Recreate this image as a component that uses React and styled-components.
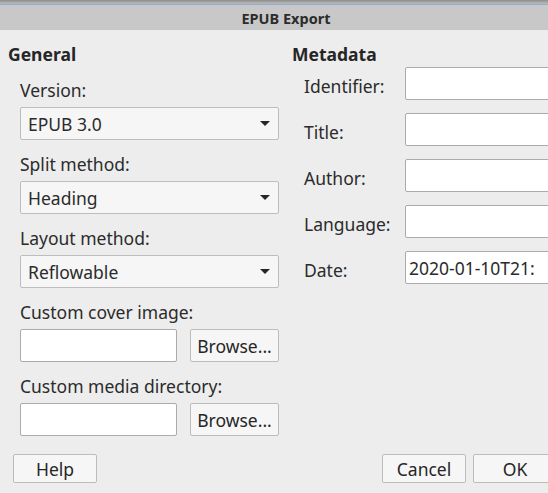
import React from "react";
import styled, { createGlobalStyle } from "styled-components";

const Global = createGlobalStyle`
  html, body { margin: 0; padding: 0; background: #ededed; }
  body { width: 548px; height: 493px; overflow: hidden; }
  #root { width: 548px; height: 493px; overflow: hidden; }
`;

const Window = styled.div`
  width: 572px;
  height: 493px;
  background: #ededed;
  font-family: "Noto Sans", "Open Sans", sans-serif;
  color: #2b2b2b;
  display: flex;
  flex-direction: column;
`;

const TopStrip = styled.div`
  height: 4px;
  background: linear-gradient(#8d8d8d, #bdbdbd);
  border-bottom: 1px solid #92abce;
`;

const TitleBar = styled.div`
  height: 25px;
  background: #c8c8c8;
  display: flex;
  align-items: center;
  justify-content: center;
  font-size: 14.5px;
  font-weight: 700;
  color: #2c2c2c;
`;

const Body = styled.div`
  display: grid;
  grid-template-columns: 272px 1fr;
  column-gap: 12px;
  padding: 13px 0 0 8px;
`;

const Column = styled.div`
  display: flex;
  flex-direction: column;
`;

const Heading = styled.div`
  font-size: 17.5px;
  font-weight: 700;
  line-height: 23px;
  color: #262626;
`;

const Field = styled.div`
  display: flex;
  flex-direction: column;
  padding-left: 12px;
`;

const Label = styled.div`
  font-size: 17.5px;
  line-height: 24px;
  margin-top: 12px;
  margin-bottom: 5px;
`;

const Combo = styled.div`
  width: 259px;
  height: 33px;
  box-sizing: border-box;
  border: 1px solid #bdbdbd;
  border-radius: 2px;
  background: #f6f6f6;
  display: flex;
  align-items: center;
  justify-content: space-between;
  padding: 0 8px 0 7px;
  font-size: 17.5px;
`;

const Arrow = styled.svg`
  width: 10px;
  height: 5px;
  fill: #262626;
`;

const FileRow = styled.div`
  display: flex;
  gap: 13px;
`;

const TextBox = styled.div`
  box-sizing: border-box;
  height: 33px;
  width: ${(p) => p.$w || "auto"};
  flex: ${(p) => (p.$grow ? 1 : "none")};
  border: 1px solid #ababab;
  border-radius: 2px;
  background: #ffffff;
  font-size: 17.5px;
  display: flex;
  align-items: center;
  padding-left: 3px;
  white-space: nowrap;
  overflow: hidden;
`;

const Button = styled.div`
  box-sizing: border-box;
  width: ${(p) => p.$w};
  height: ${(p) => p.$h};
  border: 1px solid #bcbcbc;
  border-radius: 2px;
  background: #f6f6f6;
  display: flex;
  align-items: center;
  justify-content: center;
  font-size: 17.5px;
  color: #262626;
`;

const MetaRows = styled.div`
  display: flex;
  flex-direction: column;
  gap: 13px;
  padding-left: 12px;
  margin-top: 1px;
`;

const MetaRow = styled.div`
  display: grid;
  grid-template-columns: 101px 1fr;
  align-items: center;
`;

const MetaLabel = styled.div`
  font-size: 17.5px;
  padding-top: 5px;
`;

const Footer = styled.div`
  display: flex;
  align-items: center;
  padding: 18px 0 0 13px;
`;

const Spacer = styled.div`
  flex: 1;
`;

const FooterRight = styled.div`
  display: flex;
  gap: 7px;
  padding-right: 15px;
`;

function Select({ value }) {
  return (
    <Combo>
      <span>{value}</span>
      <Arrow viewBox="0 0 10 5">
        <polygon points="0,0 10,0 5,5" />
      </Arrow>
    </Combo>
  );
}

const metaFields = [
  ["Identifier:", ""],
  ["Title:", ""],
  ["Author:", ""],
  ["Language:", ""],
  ["Date:", "2020-01-10T21:"],
];

export default function App() {
  return (
    <>
      <Global />
      <Window>
        <TopStrip />
        <TitleBar>EPUB Export</TitleBar>
        <Body>
          <Column>
            <Heading>General</Heading>
            <Field>
              <Label>Version:</Label>
              <Select value="EPUB 3.0" />
            </Field>
            <Field>
              <Label>Split method:</Label>
              <Select value="Heading" />
            </Field>
            <Field>
              <Label>Layout method:</Label>
              <Select value="Reflowable" />
            </Field>
            <Field>
              <Label>Custom cover image:</Label>
              <FileRow>
                <TextBox $w="157px" />
                <Button $w="89px" $h="33px">Browse...</Button>
              </FileRow>
            </Field>
            <Field>
              <Label>Custom media directory:</Label>
              <FileRow>
                <TextBox $w="157px" />
                <Button $w="89px" $h="33px">Browse...</Button>
              </FileRow>
            </Field>
          </Column>
          <Column>
            <Heading>Metadata</Heading>
            <MetaRows>
              {metaFields.map(([label, value]) => (
                <MetaRow key={label}>
                  <MetaLabel>{label}</MetaLabel>
                  <TextBox $grow>{value}</TextBox>
                </MetaRow>
              ))}
            </MetaRows>
          </Column>
        </Body>
        <Footer>
          <Button $w="84px" $h="29px">Help</Button>
          <Spacer />
          <FooterRight>
            <Button $w="84px" $h="29px">Cancel</Button>
            <Button $w="84px" $h="29px">OK</Button>
          </FooterRight>
        </Footer>
      </Window>
    </>
  );
}
